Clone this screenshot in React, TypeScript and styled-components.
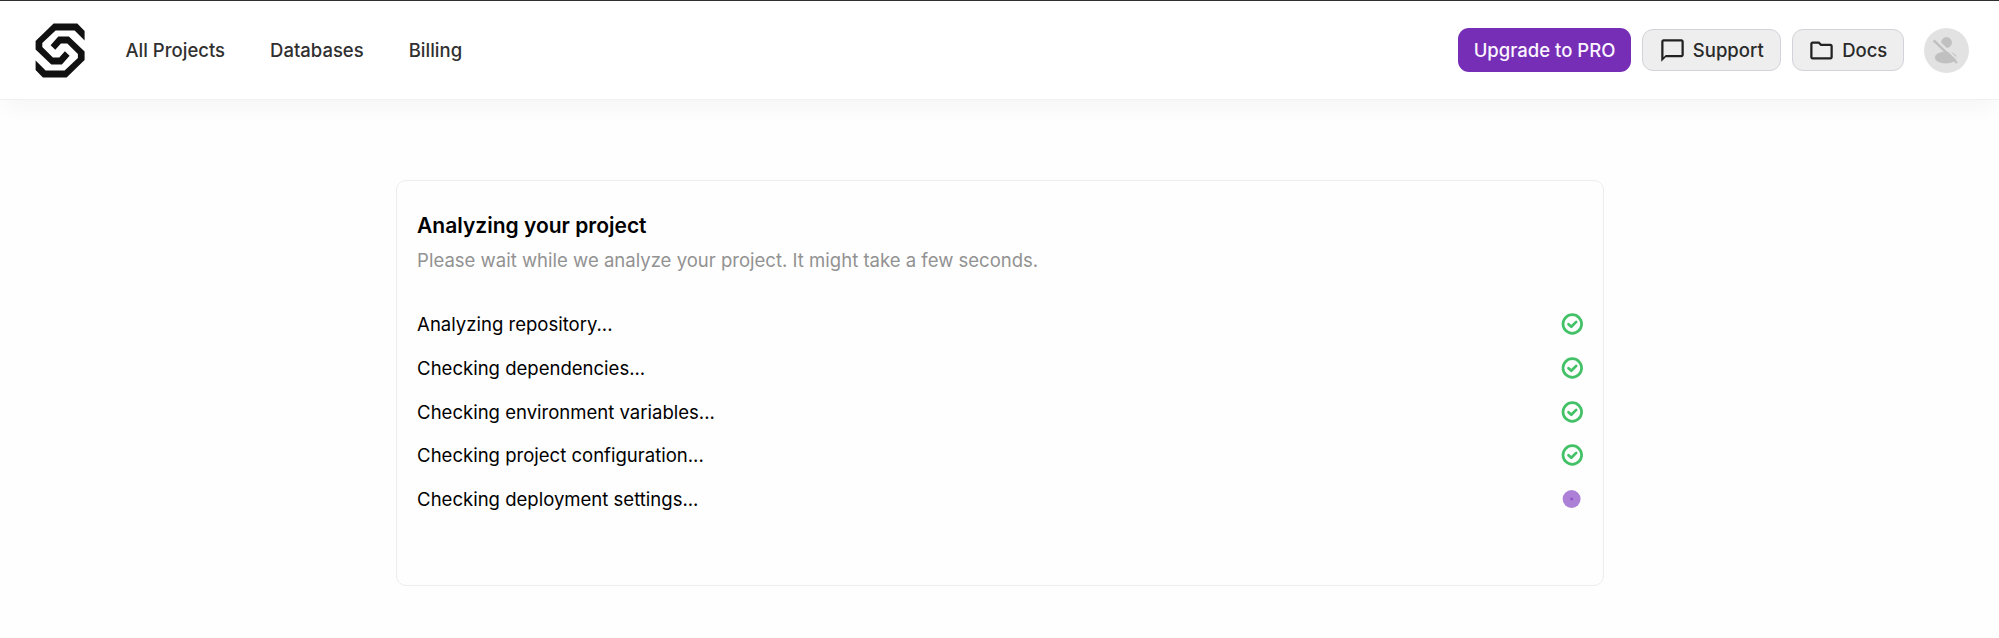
import React from "react";
import styled, { createGlobalStyle } from "styled-components";
import { MdChatBubbleOutline, MdOutlineFolder } from "react-icons/md";

const GlobalStyle = createGlobalStyle`
  *, *::before, *::after { box-sizing: border-box; }
  body {
    margin: 0;
    background: #fefefe;
    font-family: Inter, "Liberation Sans", sans-serif;
    color: #0a0a0a;
  }
`;

const Page = styled.div`
  min-height: 638px;
  overflow: hidden;
`;

const Header = styled.header`
  display: flex;
  align-items: center;
  height: 100px;
  padding: 0 30px 0 35px;
  background: #fff;
  border-top: 1px solid #302e31;
  border-bottom: 1px solid #f1f1f1;
  box-shadow: 0 13px 19px -4px rgba(0, 0, 0, 0.03);
`;

const Logo = styled.svg`
  flex: none;
  width: 51px;
  height: 55px;
  margin-right: 39.5px;
`;

const Nav = styled.nav`
  display: flex;
  flex: 1;
  gap: 45px;
`;

const NavLink = styled.a`
  font-size: 18.5px;
  font-weight: 500;
  line-height: 28px;
  color: #303030;
  white-space: nowrap;
`;

const Actions = styled.div`
  display: flex;
  align-items: center;
`;

const Button = styled.button<{ $primary?: boolean; $width: number }>`
  display: flex;
  align-items: center;
  justify-content: center;
  gap: 7px;
  width: ${(p) => p.$width}px;
  height: ${(p) => (p.$primary ? 44 : 42)}px;
  margin-right: 11px;
  padding: 0;
  border: ${(p) => (p.$primary ? "0" : "1px solid #d3d2d8")};
  border-radius: 11px;
  background: ${(p) => (p.$primary ? "#762eb6" : "#eeeeee")};
  color: ${(p) => (p.$primary ? "#fbf5ff" : "#2a2a2a")};
  font-family: inherit;
  font-size: 18.5px;
  font-weight: 500;
  white-space: nowrap;

  svg { flex: none; color: #222; }
`;

const Avatar = styled.svg`
  width: 45px;
  height: 45px;
  margin-left: 9px;
`;

const Card = styled.main`
  width: 1208px;
  height: 406px;
  margin: 80px auto 0;
  padding: 31px 19px 0 20.6px;
  border: 1px solid #ededed;
  border-radius: 10px;
  background: #fefefe;
`;

const Title = styled.h1`
  margin: 0;
  font-size: 21px;
  font-weight: 600;
  line-height: 28px;
  color: #000;
`;

const Subtitle = styled.p`
  margin: 6px 0 28.6px;
  font-size: 18.55px;
  line-height: 28px;
  color: #929292;
`;

const Steps = styled.ul`
  margin: 0;
  padding: 0;
  list-style: none;
`;

const Step = styled.li`
  display: flex;
  align-items: center;
  justify-content: space-between;
  height: 43.65px;
  font-size: 18.55px;
  color: #000;
`;

const StatusIcon = styled.svg`
  width: 24px;
  height: 24px;
`;

const logoStroke =
  "18,0 41.7,0 49,7.5 49,17 39,7 20,7 6.7,19.5 6.7,23.5 17.3,34 23.7,34 29.3,27.7 34,32.3 26.3,41 15.7,41 0,26 0,17.5";

const steps = [
  { label: "Analyzing repository...", done: true },
  { label: "Checking dependencies...", done: true },
  { label: "Checking environment variables...", done: true },
  { label: "Checking project configuration...", done: true },
  { label: "Checking deployment settings...", done: false },
];

function Status({ done }: { done: boolean }) {
  if (!done) {
    return (
      <StatusIcon viewBox="0 0 24 24">
        <circle cx="11.6" cy="12" r="9" fill="#ad80d7" />
        <circle cx="11.6" cy="12" r="1.5" fill="#9155c8" />
      </StatusIcon>
    );
  }
  return (
    <StatusIcon viewBox="0 0 24 24" fill="none" stroke="#42c167">
      <circle cx="12.3" cy="12" r="9.3" strokeWidth="2.7" />
      <path
        d="M8.5 12.2l2.8 2.6 4.9-4.9"
        strokeWidth="2.7"
        strokeLinecap="round"
        strokeLinejoin="round"
      />
    </StatusIcon>
  );
}

export default function App() {
  return (
    <Page>
      <GlobalStyle />
      <Header>
        <Logo viewBox="-0.6 -0.5 51 55" fill="#111">
          <polygon points={logoStroke} />
          <polygon points={logoStroke} transform="rotate(180 24.5 27)" />
        </Logo>
        <Nav>
          <NavLink>All Projects</NavLink>
          <NavLink>Databases</NavLink>
          <NavLink>Billing</NavLink>
        </Nav>
        <Actions>
          <Button $primary $width={173}>Upgrade to PRO</Button>
          <Button $width={138.5}>
            <MdChatBubbleOutline size={27} />
            Support
          </Button>
          <Button $width={112.5}>
            <MdOutlineFolder size={27} />
            Docs
          </Button>
          <Avatar viewBox="0 0 45 45">
            <circle cx="22.5" cy="22.5" r="22.5" fill="#e2e2e2" />
            <circle cx="22.5" cy="14.5" r="5.4" fill="#c0c0c0" />
            <ellipse cx="21.8" cy="29.5" rx="11" ry="6" fill="#c0c0c0" />
            <path d="M11.4 10.5L35 33" stroke="#e2e2e2" strokeWidth="2" />
            <path d="M9.7 12.3L33 35" stroke="#c0c0c0" strokeWidth="2.4" />
          </Avatar>
        </Actions>
      </Header>
      <Card>
        <Title>Analyzing your project</Title>
        <Subtitle>
          Please wait while we analyze your project. It might take a few seconds.
        </Subtitle>
        <Steps>
          {steps.map((step) => (
            <Step key={step.label}>
              {step.label}
              <Status done={step.done} />
            </Step>
          ))}
        </Steps>
      </Card>
    </Page>
  );
}
